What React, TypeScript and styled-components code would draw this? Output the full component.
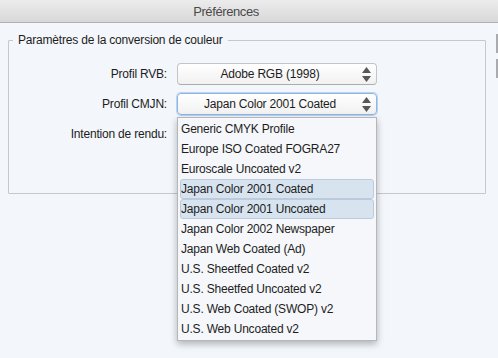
import React from "react";
import styled, { createGlobalStyle } from "styled-components";

const GlobalStyle = createGlobalStyle`
  html, body {
    margin: 0;
    padding: 0;
    background: #f3f6fa;
  }
  body {
    font-family: "Liberation Sans", Arial, sans-serif;
    color: #1d1d1d;
  }
`;

const cmykProfiles = [
  "Generic CMYK Profile",
  "Europe ISO Coated FOGRA27",
  "Euroscale Uncoated v2",
  "Japan Color 2001 Coated",
  "Japan Color 2001 Uncoated",
  "Japan Color 2002 Newspaper",
  "Japan Web Coated (Ad)",
  "U.S. Sheetfed Coated v2",
  "U.S. Sheetfed Uncoated v2",
  "U.S. Web Coated (SWOP) v2",
  "U.S. Web Uncoated v2",
];

const highlighted = ["Japan Color 2001 Coated", "Japan Color 2001 Uncoated"];

const Window = styled.div`
  width: 498px;
  height: 358px;
  overflow: hidden;
  display: flex;
  flex-direction: column;
  background: #f3f6fa;
`;

// the window is wider than the crop, so the title sits left of centre
const TitleBar = styled.div`
  height: 22px;
  flex: none;
  display: flex;
  align-items: center;
  justify-content: center;
  background: linear-gradient(#ececec, #d8d8d8);
  border-bottom: 1px solid #b1b1b1;
  color: #4a4a4a;
  font-size: 13px;
  letter-spacing: -0.4px;
  padding-right: 46px;
`;

const Body = styled.div`
  flex: 1;
  display: flex;
`;

const Content = styled.div`
  flex: 1;
  padding: 10px 10px 0 8px;
`;

const SideEdge = styled.div`
  width: 2px;
  display: flex;
  flex-direction: column;
  gap: 6px;
  padding-top: 11px;
`;

const EdgeBar = styled.div`
  height: 19px;
  background: #a9abae;
`;

const Group = styled.fieldset`
  margin: 0;
  padding: 0 0 0 4px;
  height: 161px;
  box-sizing: border-box;
  border: 1px solid #c6c8cb;
  border-radius: 1px;
`;

const Legend = styled.legend`
  padding: 0 5px;
  font-size: 12px;
  letter-spacing: -0.2px;
  line-height: 14px;
  color: #1d1d1d;
`;

const Form = styled.div`
  display: grid;
  grid-template-columns: 154px 200px;
  column-gap: 10px;
  row-gap: 8px;
  padding-top: 16px;
`;

const Label = styled.div`
  text-align: right;
  font-size: 12px;
  letter-spacing: -0.2px;
  line-height: 22px;
  color: #1d1d1d;
`;

const Cell = styled.div`
  position: relative;
  height: 22px;
`;

const PopupButton = styled.div<{ $focused?: boolean }>`
  height: 22px;
  box-sizing: border-box;
  display: flex;
  align-items: center;
  justify-content: center;
  padding-right: 14px;
  border-radius: 4px;
  border: 1px solid ${(p) => (p.$focused ? "#8fb6e2" : "#c3c4c6")};
  border-bottom-color: ${(p) => (p.$focused ? "#8fb6e2" : "#acadaf")};
  box-shadow: ${(p) => (p.$focused ? "0 0 0 1px #b9d3f0" : "none")};
  background: linear-gradient(#ffffff, #f1f1f2);
  font-size: 12px;
  letter-spacing: -0.2px;
  color: #1d1d1d;
  position: relative;
`;

const Arrows = styled.svg`
  position: absolute;
  right: 4px;
  top: 2px;
`;

const Menu = styled.div`
  position: absolute;
  left: 0;
  top: 24px;
  width: 200px;
  box-sizing: border-box;
  padding: 1px 0;
  background: #f5f7fa;
  border: 1px solid #b4b6b9;
  box-shadow: 0 3px 7px rgba(0, 0, 0, 0.28);
  z-index: 2;
`;

const MenuItem = styled.div<{ $active?: boolean }>`
  height: 20px;
  box-sizing: border-box;
  margin: 0 2px;
  padding-left: 0;
  display: flex;
  align-items: center;
  font-size: 12px;
  letter-spacing: -0.2px;
  color: #1d1d1d;
  border-radius: 3px;
  background: ${(p) => (p.$active ? "#d7e4f0" : "transparent")};
  border: 1px solid ${(p) => (p.$active ? "#bccbdb" : "transparent")};
`;

const StepperArrows = () => (
  <Arrows width="11" height="17" viewBox="0 0 11 17">
    <path d="M5.5 1 L10 7 L1 7 Z" fill="#565759" />
    <path d="M1 10 L10 10 L5.5 16 Z" fill="#565759" />
  </Arrows>
);

export default function App() {
  return (
    <>
      <GlobalStyle />
      <Window>
        <TitleBar>Préférences</TitleBar>
        <Body>
          <Content>
            <Group>
              <Legend>Paramètres de la conversion de couleur</Legend>
              <Form>
                <Label>Profil RVB:</Label>
                <Cell>
                  <PopupButton>
                    Adobe RGB (1998)
                    <StepperArrows />
                  </PopupButton>
                </Cell>
                <Label>Profil CMJN:</Label>
                <Cell>
                  <PopupButton $focused>
                    Japan Color 2001 Coated
                    <StepperArrows />
                  </PopupButton>
                  <Menu>
                    {cmykProfiles.map((name) => (
                      <MenuItem key={name} $active={highlighted.includes(name)}>
                        {name}
                      </MenuItem>
                    ))}
                  </Menu>
                </Cell>
                <Label>Intention de rendu:</Label>
                <Cell />
              </Form>
            </Group>
          </Content>
          <SideEdge>
            <EdgeBar />
            <EdgeBar />
          </SideEdge>
        </Body>
      </Window>
    </>
  );
}
